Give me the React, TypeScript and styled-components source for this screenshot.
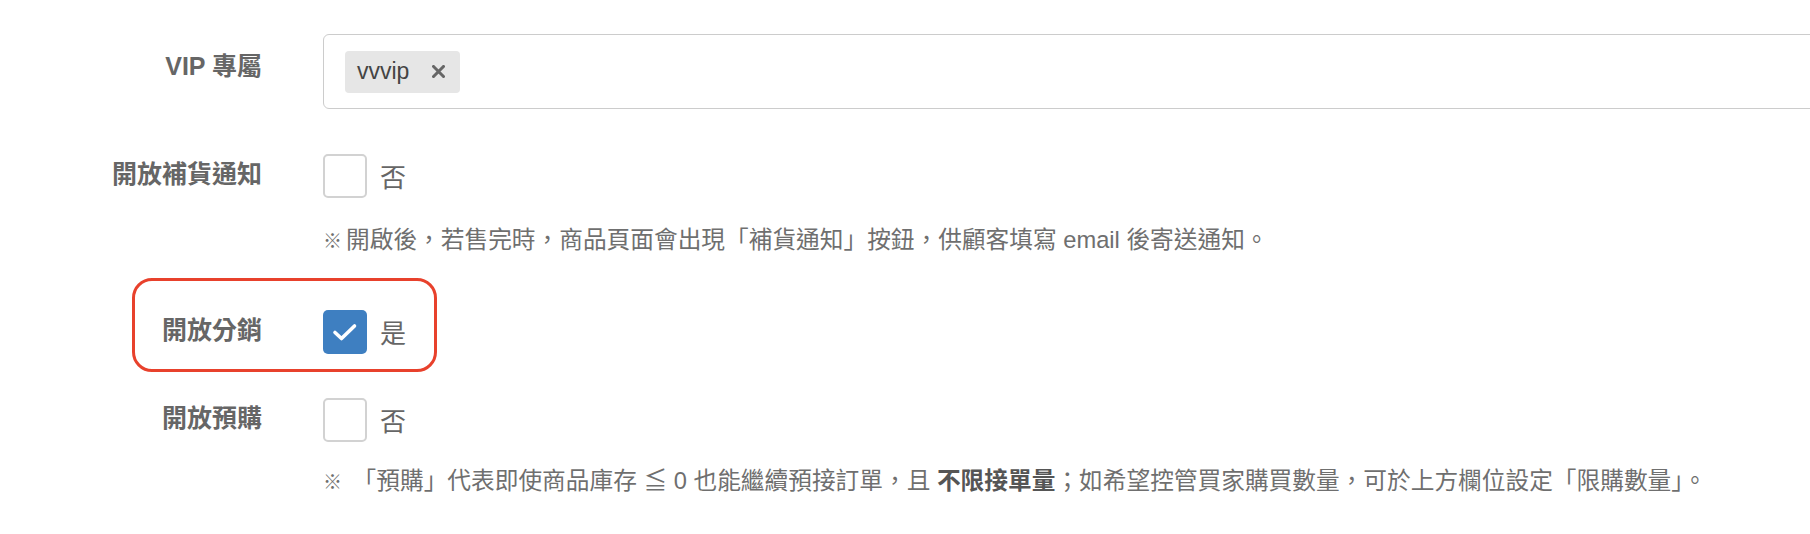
import React, { useState } from "react";
import styled, { createGlobalStyle } from "styled-components";

const GlobalStyle = createGlobalStyle`
  html, body {
    margin: 0;
    padding: 0;
    background: #ffffff;
    overflow: hidden;
  }
  body {
    font-family: "Liberation Sans", "Noto Sans CJK TC", sans-serif;
    color: #666666;
  }
`;

const Form = styled.div`
  width: 1830px;
  padding-top: 34px;
  display: flex;
  flex-direction: column;
`;

const Row = styled.div<{ $mt?: number; $highlight?: boolean }>`
  position: relative;
  display: grid;
  grid-template-columns: 262px 1fr;
  column-gap: 61px;
  align-items: center;
  margin-top: ${(p) => p.$mt ?? 0}px;

  ${(p) =>
    p.$highlight &&
    `
    &::after {
      content: "";
      position: absolute;
      left: 132px;
      top: -32px;
      width: 305px;
      height: 94px;
      box-sizing: border-box;
      border: 3px solid #e8412c;
      border-radius: 20px;
      pointer-events: none;
    }
  `}
`;

const Label = styled.div<{ $pb?: number }>`
  text-align: right;
  font-family: "Liberation Sans", "Noto Sans CJK TC", sans-serif;
  font-weight: 700;
  font-size: 25px;
  line-height: 32px;
  color: #666666;
  padding-bottom: ${(p) => p.$pb ?? 5}px;
  white-space: nowrap;
`;

const TagInput = styled.div`
  height: 75px;
  box-sizing: border-box;
  border: 1px solid #cccccc;
  border-radius: 6px;
  display: flex;
  align-items: center;
  padding-left: 21px;
`;

const Tag = styled.span`
  height: 42px;
  box-sizing: border-box;
  display: inline-flex;
  align-items: center;
  gap: 23px;
  padding: 0 15px 0 12px;
  background: #e6e6e6;
  border-radius: 4px;
  font-size: 23px;
  color: #444444;
`;

const TagRemove = styled.span`
  display: inline-flex;
  width: 13px;
  height: 13px;
  cursor: pointer;
`;

const CheckLine = styled.label`
  display: flex;
  align-items: center;
  gap: 13px;
  cursor: pointer;
`;

const Box = styled.span<{ $checked: boolean }>`
  width: 44px;
  height: 44px;
  box-sizing: border-box;
  border-radius: 5px;
  border: ${(p) => (p.$checked ? "none" : "2px solid #d2d2d2")};
  background: ${(p) => (p.$checked ? "#3e7fc1" : "#ffffff")};
  display: inline-flex;
  align-items: center;
  justify-content: center;
`;

const OptionText = styled.span`
  font-family: "Noto Sans CJK TC", sans-serif;
  font-size: 26px;
  color: #666666;
  line-height: 44px;
`;

const Help = styled.div<{ $mt: number }>`
  margin-top: ${(p) => p.$mt}px;
  margin-left: 323px;
  font-size: 23.7px;
  line-height: 32px;
  color: #6f6f6f;
  white-space: nowrap;
`;

const Mark = styled.span`
  font-size: 19px;
  margin-right: 4px;
`;

const Strong = styled.b`
  font-weight: 700;
  color: #555555;
`;

const Check = ({ checked, text, onToggle }: { checked: boolean; text: string; onToggle: () => void }) => (
  <CheckLine onClick={onToggle}>
    <Box $checked={checked}>
      {checked && (
        <svg width="26" height="20" viewBox="0 0 26 20">
          <path d="M3 10.5 L9.5 16.5 L22.5 4" fill="none" stroke="#ffffff" strokeWidth="3.6" strokeLinecap="round" strokeLinejoin="round" />
        </svg>
      )}
    </Box>
    <OptionText>{text}</OptionText>
  </CheckLine>
);

export default function App() {
  const [restock, setRestock] = useState(false);
  const [dist, setDist] = useState(true);
  const [pre, setPre] = useState(false);

  return (
    <>
      <GlobalStyle />
      <Form>
        <Row>
          <Label $pb={12}>VIP 專屬</Label>
          <TagInput>
            <Tag>
              vvvip
              <TagRemove>
                <svg width="13" height="13" viewBox="0 0 13 13">
                  <path d="M1.5 1.5 L11.5 11.5 M11.5 1.5 L1.5 11.5" stroke="#666666" strokeWidth="3" strokeLinecap="square" />
                </svg>
              </TagRemove>
            </Tag>
          </TagInput>
        </Row>

        <Row $mt={45}>
          <Label>開放補貨通知</Label>
          <Check checked={restock} text={restock ? "是" : "否"} onToggle={() => setRestock(!restock)} />
        </Row>
        <Help $mt={26}>
          <Mark>※</Mark>開啟後，若售完時，商品頁面會出現「補貨通知」按鈕，供顧客填寫 email 後寄送通知。
        </Help>

        <Row $mt={52} $highlight>
          <Label>開放分銷</Label>
          <Check checked={dist} text={dist ? "是" : "否"} onToggle={() => setDist(!dist)} />
        </Row>

        <Row $mt={44}>
          <Label>開放預購</Label>
          <Check checked={pre} text={pre ? "是" : "否"} onToggle={() => setPre(!pre)} />
        </Row>
        <Help $mt={23}>
          <Mark>※</Mark> 「預購」代表即使商品庫存 ≦ 0 也能繼續預接訂單，且 <Strong>不限接單量</Strong>；如希望控管買家購買數量，可於上方欄位設定「限購數量」。
        </Help>
      </Form>
    </>
  );
}
